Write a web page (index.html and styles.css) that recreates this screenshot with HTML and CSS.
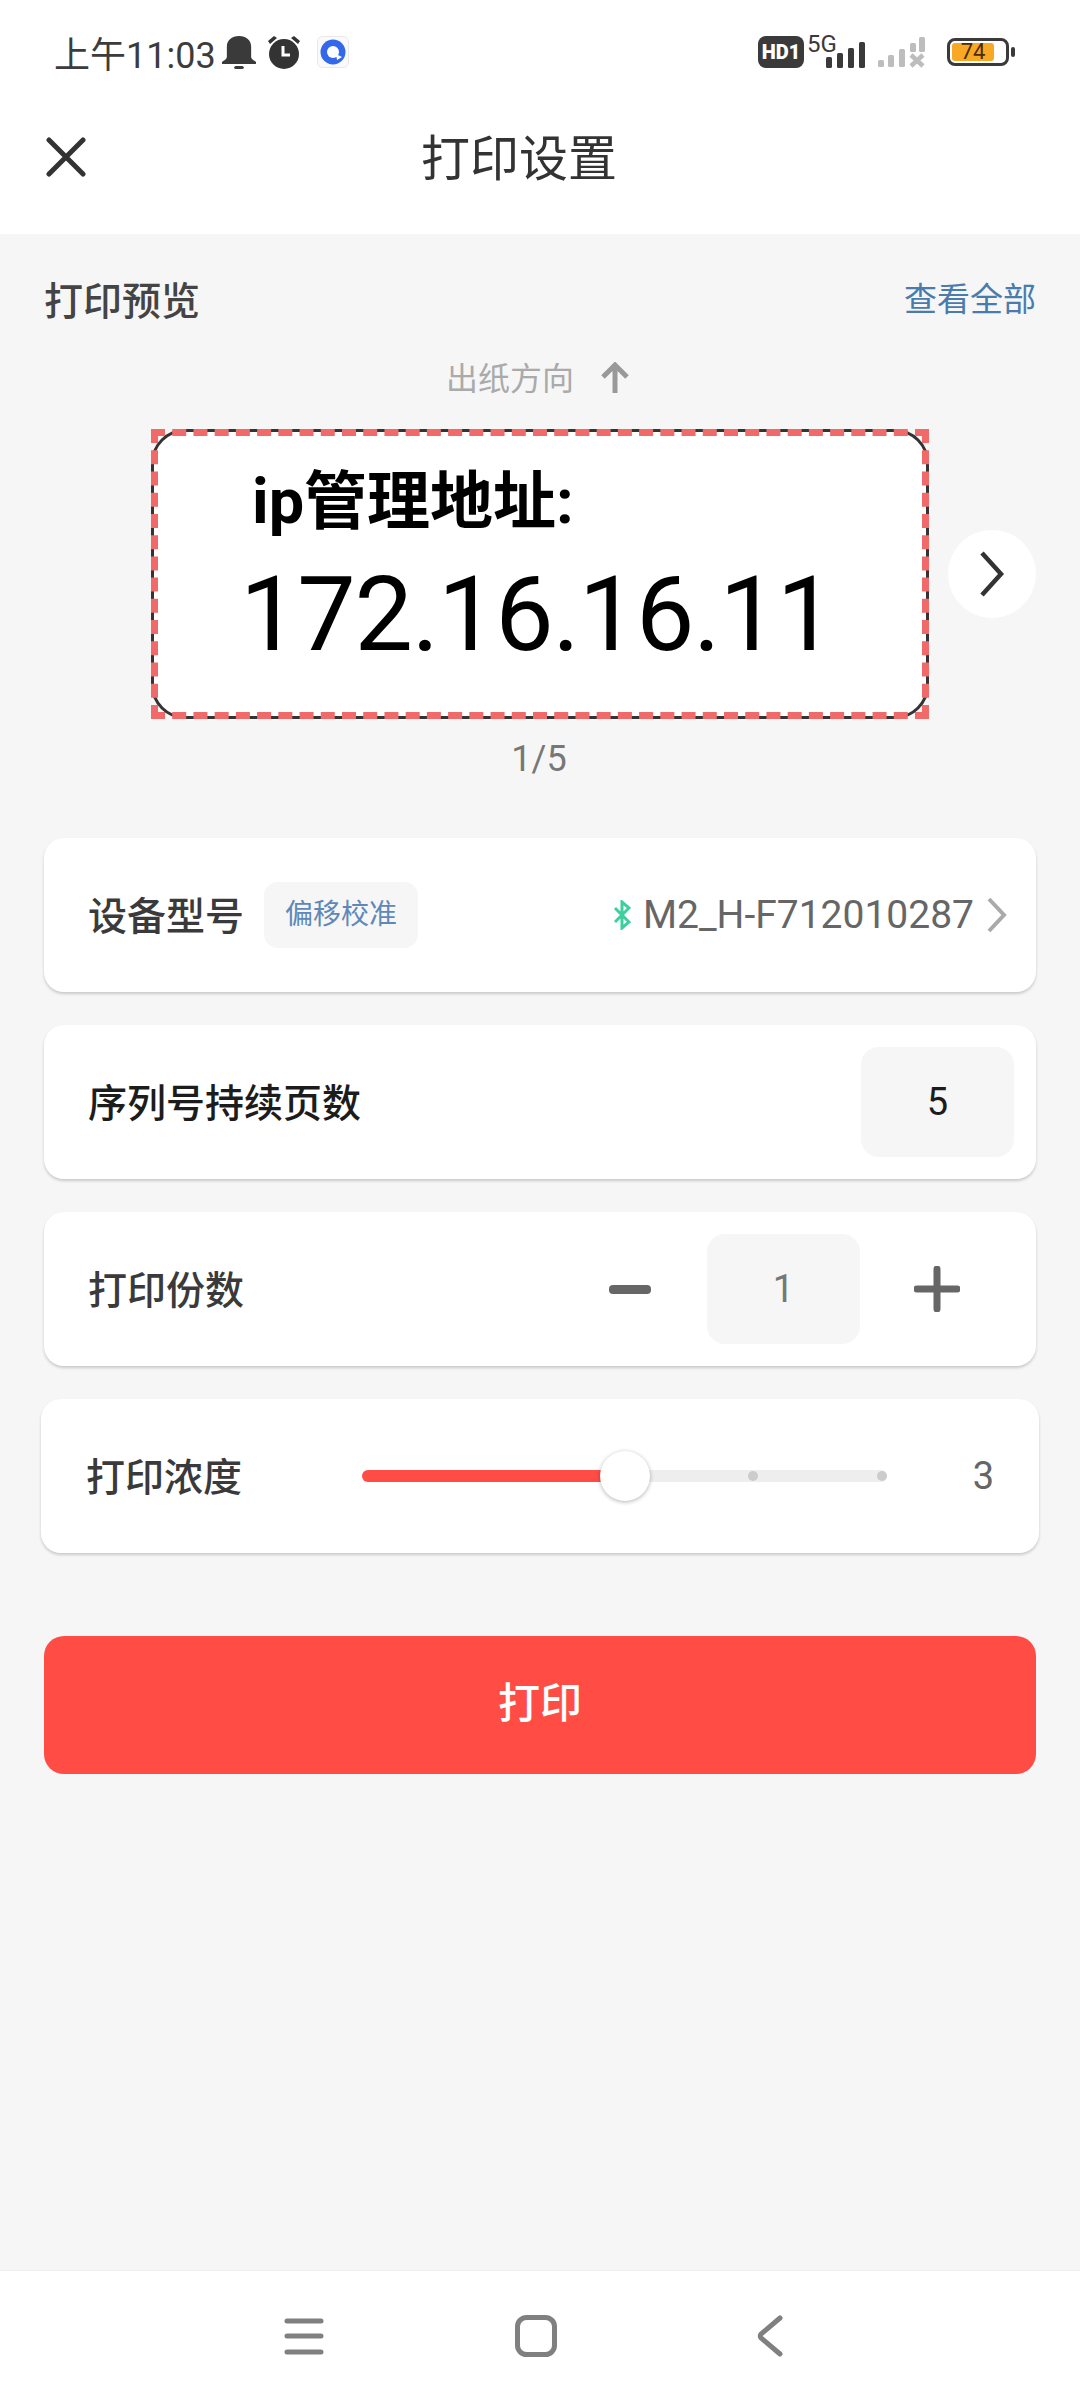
FILE: index.html
```html
<!DOCTYPE html>
<html lang="zh-CN">
<head>
    <meta charset="UTF-8">
    <meta name="viewport" content="width=device-width, initial-scale=1.0">
    <title>打印设置</title>
    <link rel="stylesheet" href="styles.css">
</head>
<body>

    <div class="top">
        <div class="status">
            <span class="time">上午11:03</span>
            <svg class="ic-bell" width="34" height="34" viewBox="3 0 28 34" preserveAspectRatio="none"><path d="M17 1c-6 0-10 4.500-10 10.500V22c0 1.500-1 2.500-3 4-1.500 1-2 3 0 3h26c2 0 1.500-2 0-3-2-1.500-3-2.500-3-4V11.500C27 5.500 23 1 17 1z" fill="#3a3a3a"/><rect x="13" y="31" width="8" height="3" rx="1.500" fill="#3a3a3a"/></svg>
            <svg class="ic-alarm" width="34" height="34" viewBox="0 0 34 34"><circle cx="17" cy="19" r="15" fill="#333"/><path d="M1 6l6-5 3 2-7 6zM33 6l-6-5-3 2 7 6z" fill="#333"/><path d="M16 11v9h7" fill="none" stroke="#fff" stroke-width="3"/></svg>
            <svg class="ic-app" width="32" height="32" viewBox="0 0 32 32"><rect x=".5" y=".5" width="31" height="31" rx="5" fill="#fafafa" stroke="#e8e8e8"/><circle cx="16" cy="16" r="12.500" fill="#3468ea"/><circle cx="16" cy="16" r="6" fill="#fff"/><path d="M19 18l6 3-5 3z" fill="#fff"/></svg>
            <span class="status-gap"></span>
            <span class="hd">HD1</span>
            <span class="net">
                <span class="net-label">5G</span>
                <svg width="40" height="28" viewBox="0 0 40 28"><rect x="0" y="15" width="6" height="11" rx="1.500" fill="#3a3a3a"/><rect x="11" y="11" width="6" height="15" rx="1.500" fill="#3a3a3a"/><rect x="22" y="6" width="6" height="20" rx="1.500" fill="#3a3a3a"/><rect x="33" y="0" width="6" height="26" rx="1.500" fill="#3a3a3a"/></svg>
            </span>
            <svg class="ic-sim2" width="48" height="32" viewBox="0 0 48 32"><g fill="#bdbdbd"><rect x="0" y="24" width="6" height="7" rx="1.500"/><rect x="10" y="19" width="6" height="12" rx="1.500"/><rect x="21" y="13" width="6" height="18" rx="1.500"/><rect x="32" y="7" width="6" height="9" rx="1.500"/><rect x="41" y="1" width="6" height="15" rx="1.500"/></g><path d="M33 19l12 11M45 19L33 30" stroke="#bdbdbd" stroke-width="4.500" fill="none"/></svg>
            <span class="battery"><span class="battery-fill">74</span></span>
            <span class="battery-nub"></span>
        </div>
        <div class="nav">
            <svg class="ic-close" width="40" height="40" viewBox="0 0 40 40"><path d="M3 3l34 34M37 3L3 37" stroke="#333" stroke-width="5" stroke-linecap="round" fill="none"/></svg>
            <h1 class="nav-title">打印设置</h1>
        </div>
    </div>

    <div class="main">
        <div class="section-head">
            <span class="section-title">打印预览</span>
            <span class="section-link">查看全部</span>
        </div>

        <div class="direction">
            <span class="direction-text">出纸方向</span>
            <svg width="30" height="32" viewBox="0 0 30 32"><path d="M15 31V3M3 15L15 3l12 12" stroke="#999" stroke-width="5" fill="none"/></svg>
        </div>

        <div class="preview-row">
            <div class="frame">
                <div class="label">
                    <div class="label-title">ip管理地址:</div>
                    <div class="label-ip">172.16.16.11</div>
                </div>
            </div>
            <div class="next">
                <svg width="26" height="48" viewBox="0 0 26 48"><path d="M3 3l19 21L3 45" stroke="#333" stroke-width="4.500" fill="none"/></svg>
            </div>
        </div>

        <div class="pager">1/5</div>

        <div class="card">
            <span class="row-label">设备型号</span>
            <span class="tag">偏移校准</span>
            <span class="device">
                <svg width="18" height="30" viewBox="0 0 18 30"><path d="M2 8l14 14-7 6V2l7 6L2 22" stroke="#3ecfa0" stroke-width="3" fill="none"/></svg>
                <span class="device-name">M2_H-F712010287</span>
                <svg width="22" height="36" viewBox="0 0 22 36"><path d="M3 2l15 16L3 34" stroke="#aaa" stroke-width="4" fill="none"/></svg>
            </span>
        </div>

        <div class="card">
            <span class="row-label dark">序列号持续页数</span>
            <span class="num-box box-end dark">5</span>
        </div>

        <div class="card">
            <span class="row-label">打印份数</span>
            <span class="stepper">
                <span class="step-minus"></span>
                <span class="num-box muted">1</span>
                <svg class="step-plus" width="46" height="46" viewBox="0 0 46 46"><path d="M3 23h40M23 3v40" stroke="#666" stroke-width="7" stroke-linecap="round" fill="none"/></svg>
            </span>
        </div>

        <div class="card card-wide">
            <span class="row-label">打印浓度</span>
            <div class="slider">
                <div class="slider-fill"></div>
                <span class="slider-dot dot-a"></span>
                <span class="slider-dot dot-b"></span>
                <span class="slider-thumb"></span>
            </div>
            <span class="slider-value">3</span>
        </div>

        <div class="print-btn">打印</div>
    </div>

    <div class="bottom">
        <svg width="40" height="38" viewBox="0 0 40 38"><path d="M3 4h34M3 19h34M3 35h34" stroke="#808080" stroke-width="5" stroke-linecap="round" fill="none"/></svg>
        <svg class="nav-home" width="42" height="42" viewBox="0 0 42 42"><rect x="2.500" y="2.500" width="37" height="37" rx="9" stroke="#808080" stroke-width="5" fill="none"/></svg>
        <svg class="nav-back" width="26" height="42" viewBox="0 0 26 42"><path d="M23 3L4 19c-1 1-1 3 0 4l19 16" stroke="#808080" stroke-width="5" stroke-linecap="round" fill="none"/></svg>
    </div>

</body>
</html>
```

FILE: styles.css
```css
* {
    box-sizing: border-box;
}
body {
    margin: 0;
    width: 1080px;
    height: 2400px;
    display: flex;
    flex-direction: column;
    background-color: #f6f6f6;
    font-family: Roboto, "Noto Sans CJK SC", sans-serif;
    color: #333;
}

/* status bar + title */
.top {
    height: 234px;
    background-color: #fff;
}
.status {
    height: 80px;
    margin-top: 12px;
    padding: 0 0 0 54px;
    display: flex;
    align-items: center;
}
.time {
    font-size: 36px;
    color: #3c3c3c;
    width: 168px;
    white-space: nowrap;
}
.ic-alarm { margin-left: 11px; }
.ic-app { margin-left: 16px; }
.status-gap { width: 409px; }
.hd {
    width: 46px;
    height: 32px;
    background-color: #3a3a3a;
    border-radius: 8px;
    color: #fff;
    font-size: 20px;
    font-weight: 900;
    line-height: 32px;
    text-align: center;
}
.net {
    width: 56px;
    height: 36px;
    margin-left: 6px;
    display: flex;
    align-items: flex-end;
    justify-content: flex-end;
    position: relative;
}
.net-label {
    position: absolute;
    left: -3px;
    top: -4px;
    font-size: 24px;
    color: #3a3a3a;
}
.ic-sim2 { margin-left: 12px; }
.battery {
    width: 62px;
    height: 28px;
    margin-left: 21px;
    border: 3px solid #3a3a3a;
    border-radius: 8px;
    padding: 2px;
    display: flex;
}
.battery-fill {
    width: 42px;
    background-color: #f9a825;
    border-radius: 3px;
    color: #4a2c00;
    font-size: 22px;
    line-height: 18px;
    text-align: center;
}
.battery-nub {
    width: 4px;
    height: 10px;
    margin-left: 2px;
    background-color: #3a3a3a;
    border-radius: 2px;
}
.nav {
    height: 130px;
    padding-left: 46px;
    display: flex;
    align-items: center;
}
.nav-title {
    margin: 0 0 0 335px;
    padding-top: 5px;
    font-size: 49px;
    font-weight: 400;
    line-height: 60px;
    color: #333;
}

.main {
    flex: 1;
    padding: 46px 44px 0;
}
.section-head {
    height: 40px;
    display: flex;
    justify-content: space-between;
    align-items: center;
}
.section-title {
    font-size: 39px;
    font-weight: 500;
    color: #444;
    padding-bottom: 4px;
}
.section-link {
    font-size: 33px;
    color: #4a7bad;
    position: relative;
    top: -3px;
}
.direction {
    height: 40px;
    margin-top: 38px;
    padding-right: 4px;
    display: flex;
    justify-content: center;
    align-items: center;
    gap: 26px;
    font-size: 32px;
    color: #aaa;
}
.direction-text {
    padding-bottom: 4px;
}

/* label preview */
.preview-row {
    margin-top: 31px;
    padding-left: 107px;
    display: flex;
    justify-content: space-between;
    align-items: center;
}
.frame {
    width: 778px;
    height: 290px;
    position: relative;
}
.frame::after {
    content: "";
    position: absolute;
    inset: 0;
    border: 7px dashed #f06a6a;
}
.label {
    height: 100%;
    background-color: #fff;
    border: 3px solid #333;
    border-radius: 34px;
    padding: 30px 0 0 86px;
    color: #000;
}
.label-title {
    font-size: 63px;
    font-weight: 700;
    line-height: 80px;
    white-space: nowrap;
    margin-left: 12px;
}
.label-ip {
    font-size: 104px;
    line-height: 116px;
    letter-spacing: -1.200px;
    margin-top: 15px;
    white-space: nowrap;
}
.next {
    width: 88px;
    height: 88px;
    background-color: #fff;
    border-radius: 50%;
    display: flex;
    justify-content: center;
    align-items: center;
}
.pager {
    height: 40px;
    margin-top: 20px;
    margin-bottom: -1px;
    padding-right: 2px;
    text-align: center;
    font-size: 36px;
    line-height: 40px;
    color: #777;
}

/* setting rows */
.card {
    height: 154px;
    margin-bottom: 33px;
    padding: 0 22px 0 44px;
    background-color: #fff;
    border-radius: 20px;
    box-shadow: 0 2px 3px rgba(0,0,0,0.18);
    display: flex;
    align-items: center;
}
.pager + .card {
    margin-top: 60px;
}
.card-wide {
    margin-left: -3px;
    margin-right: -3px;
    padding-left: 45px;
}
.row-label {
    font-size: 39px;
    font-weight: 500;
    color: #3a3a3a;
    padding-bottom: 5px;
}
.dark {
    color: #1c1c1c;
}
.tag {
    width: 154px;
    height: 66px;
    margin-left: 20px;
    background-color: #f6f6f6;
    border-radius: 14px;
    color: #5f88b8;
    font-size: 28px;
    line-height: 66px;
    text-align: center;
}
.device {
    margin-left: auto;
    margin-right: 6px;
    display: flex;
    align-items: center;
    gap: 12px;
}
.device-name {
    font-size: 39px;
    color: #666;
    white-space: nowrap;
}
.num-box {
    width: 153px;
    height: 110px;
    padding: 0;
    background-color: #f6f6f6;
    border-radius: 18px;
    font-size: 38px;
    line-height: 110px;
    text-align: center;
}
.box-end {
    margin-left: auto;
}
.muted {
    color: #777;
}
.stepper {
    margin-left: auto;
    margin-right: 54px;
    display: flex;
    align-items: center;
}
.step-minus {
    width: 42px;
    height: 9px;
    background-color: #666;
    border-radius: 4px;
    margin-right: 56px;
}
.step-plus {
    margin-left: 54px;
}

.slider {
    width: 525px;
    height: 12px;
    margin-left: 120px;
    background-color: #eee;
    border-radius: 6px;
    position: relative;
}
.slider-fill {
    width: 50%;
    height: 100%;
    background-color: #ff4d46;
    border-radius: 6px;
}
.slider-dot {
    position: absolute;
    top: 1px;
    width: 10px;
    height: 10px;
    background-color: #ccc;
    border-radius: 50%;
}
.dot-a { left: 386px; }
.dot-b { left: 515px; }
.slider-thumb {
    position: absolute;
    left: 238px;
    top: -19px;
    width: 50px;
    height: 50px;
    background-color: #fff;
    border-radius: 50%;
    box-shadow: 0 1px 4px rgba(0,0,0,0.3);
}
.slider-value {
    margin-left: auto;
    margin-right: 23px;
    font-size: 38px;
    color: #666;
}

.print-btn {
    height: 138px;
    margin-top: 83px;
    background-color: #ff4d46;
    border-radius: 20px;
    color: #fff;
    font-size: 42px;
    font-weight: 500;
    line-height: 136px;
    text-align: center;
}

.bottom {
    height: 130px;
    padding-left: 284px;
    background-color: #fff;
    border-top: 1px solid #eee;
    display: flex;
    align-items: center;
}
.nav-home {
    margin-left: 191px;
}
.nav-back {
    margin-left: 200px;
}
```
